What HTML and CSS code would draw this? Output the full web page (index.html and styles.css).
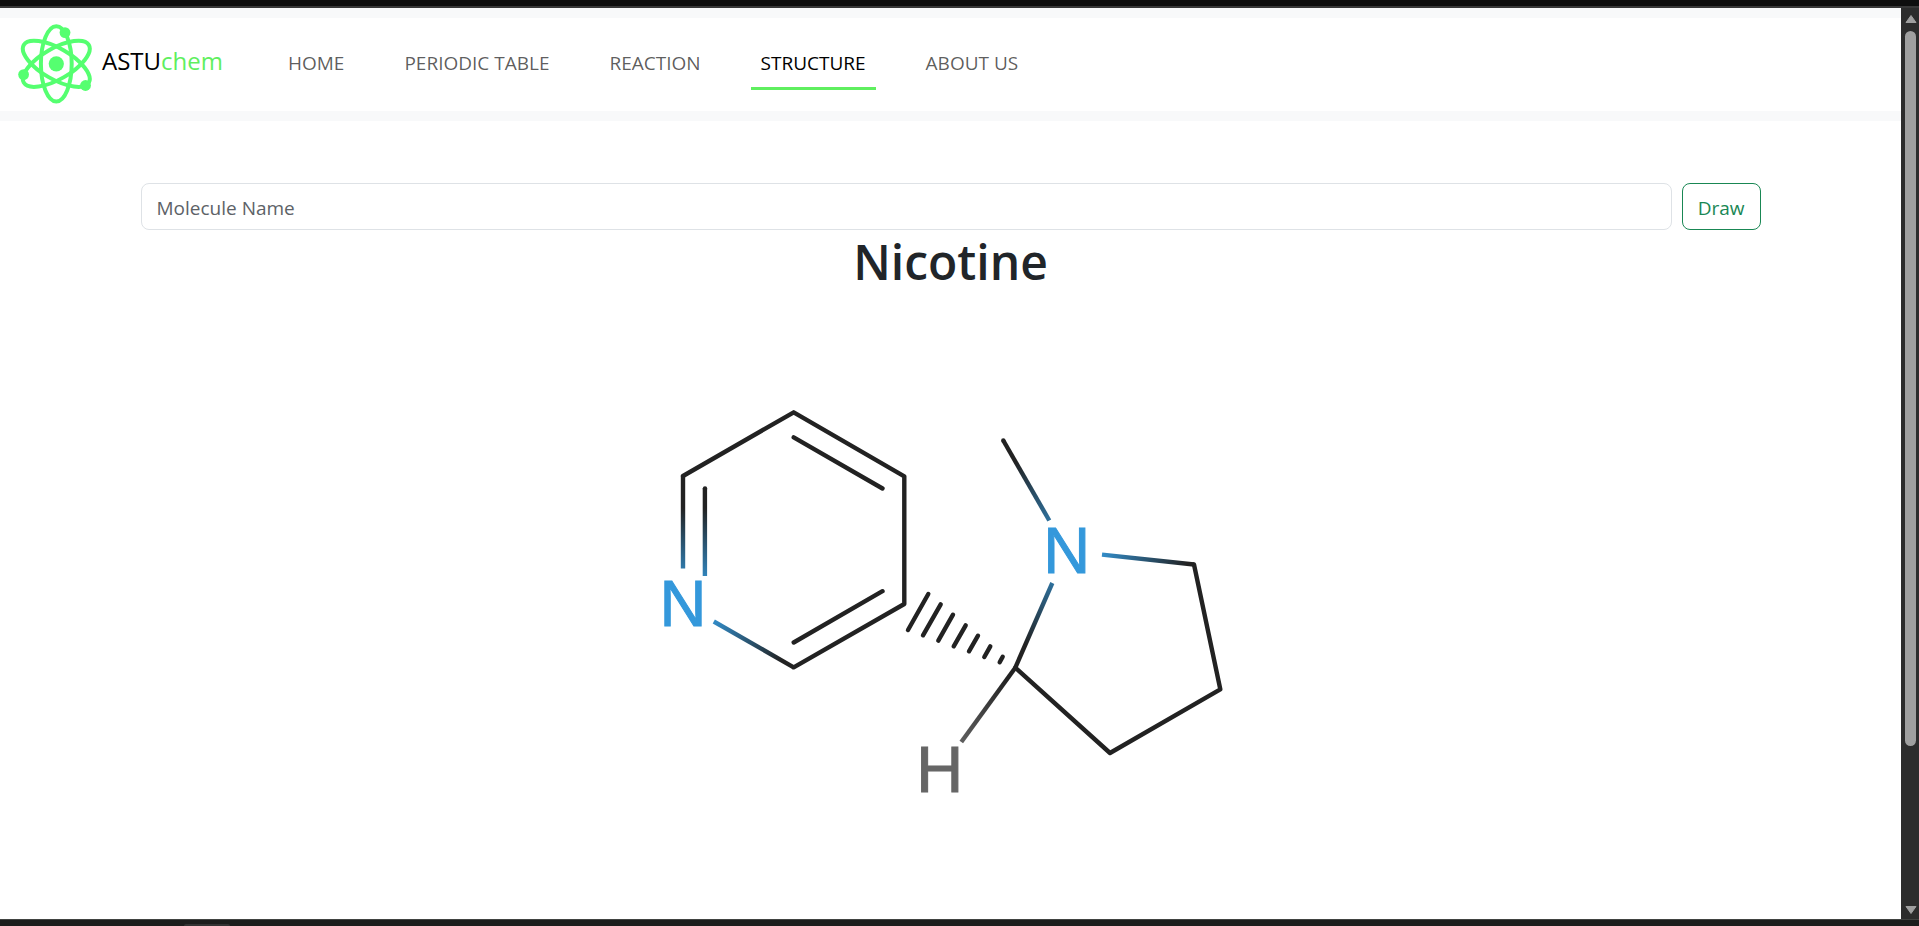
FILE: index.html
```html
<!DOCTYPE html>
<html lang="en">
<head>
<meta charset="utf-8">
<title>ASTUchem - Structure</title>
<link rel="stylesheet" href="styles.css">
</head>
<body>
<div class="window-top"></div>
<div class="viewport">
  <div class="page">
    <header class="site-header">
      <nav class="navbar" aria-label="Main">
        <a class="brand" href="#">
          <svg class="brand-logo" viewBox="18 23 76 82" aria-hidden="true">
            <g fill="none" stroke="#55ff70" stroke-width="4">
              <ellipse cx="56.3" cy="63.8" rx="15.4" ry="37.6"/>
              <ellipse cx="56.3" cy="63.8" rx="15.4" ry="37.6" transform="rotate(60 56.3 63.8)"/>
              <ellipse cx="56.3" cy="63.8" rx="15.4" ry="37.6" transform="rotate(-60 56.3 63.8)"/>
            </g>
            <g fill="#55ff70">
              <circle cx="56.3" cy="63.8" r="7.6"/>
              <circle cx="65" cy="32.6" r="5.4"/>
              <circle cx="23.6" cy="74.6" r="5.4"/>
              <circle cx="85.5" cy="85.5" r="5.4"/>
            </g>
          </svg>
          <span class="brand-name">ASTU<span class="brand-accent">chem</span></span>
        </a>
        <ul class="nav-list">
          <li><a class="nav-link" href="#">HOME</a></li>
          <li><a class="nav-link" href="#">PERIODIC TABLE</a></li>
          <li><a class="nav-link" href="#">REACTION</a></li>
          <li><a class="nav-link active" href="#" aria-current="page">STRUCTURE</a></li>
          <li><a class="nav-link" href="#">ABOUT US</a></li>
        </ul>
      </nav>
    </header>
    <main class="container">
      <form class="search">
        <input class="search-input" type="search" placeholder="Molecule Name" aria-label="Molecule Name">
        <button class="search-button" type="submit">Draw</button>
      </form>
      <h1 class="title">Nicotine</h1>
      <svg class="molecule" viewBox="640 293 621 620" role="img" aria-label="Structure of nicotine">
        <defs>
          <linearGradient id="b1" gradientUnits="userSpaceOnUse" x1="683" y1="476" x2="683" y2="604"><stop offset=".25" stop-color="#222"/><stop offset=".9" stop-color="#3498db"/></linearGradient>
          <linearGradient id="b2" gradientUnits="userSpaceOnUse" x1="793" y1="667" x2="683" y2="604"><stop offset=".1" stop-color="#222"/><stop offset=".8" stop-color="#3498db"/></linearGradient>
          <linearGradient id="b3" gradientUnits="userSpaceOnUse" x1="1003" y1="440" x2="1067" y2="551"><stop offset=".2" stop-color="#222"/><stop offset="1" stop-color="#3498db"/></linearGradient>
          <linearGradient id="b4" gradientUnits="userSpaceOnUse" x1="1194" y1="564" x2="1067" y2="551"><stop offset=".05" stop-color="#222"/><stop offset=".8" stop-color="#3498db"/></linearGradient>
          <linearGradient id="b5" gradientUnits="userSpaceOnUse" x1="1015" y1="668" x2="1067" y2="551"><stop offset=".2" stop-color="#222"/><stop offset="1" stop-color="#3498db"/></linearGradient>
          <linearGradient id="b6" gradientUnits="userSpaceOnUse" x1="1015" y1="668" x2="940" y2="770"><stop offset=".1" stop-color="#222"/><stop offset=".8" stop-color="#666"/></linearGradient>
        </defs>
        <g fill="none" stroke="#222" stroke-width="4.4" stroke-linecap="round" stroke-linejoin="round">
          <path d="M683 476L793.7 412.3L904.3 476.3V604L793.7 667.3"/>
          <path d="M793.7 437.3L882.5 488.5M793.7 642.5L882.5 591.2"/>
          <path d="M1194 564.5L1220.3 689.3L1110 753L1015.3 667.7"/>
          <path d="M928.3 594L908 630M940.7 604.3L923 635.3M953 614.7L938.3 640.7M965.7 625.3L953.7 646.3M978 635.7L969 651.3M990.3 646.3L984.3 657M1002.7 656.7L999.7 662.3"/>
          <path d="M705 488.5V489"/>
        </g>
        <g fill="none" stroke-width="4.4">
          <path d="M683 476V568.5M704.9 488V576" stroke="url(#b1)"/>
          <path d="M793.7 667.3L713.8 621.5" stroke="url(#b2)"/>
          <path d="M1003.3 440.5L1049.3 520.5" stroke="url(#b3)"/>
          <path d="M1194 564.5L1102 554.6" stroke="url(#b4)"/>
          <path d="M1015.3 667.7L1052.3 583" stroke="url(#b5)"/>
          <path d="M1015.3 667.7L961.3 742" stroke="url(#b6)"/>
        </g>
        <circle cx="1003.3" cy="440.5" r="2.2" fill="#222"/>
        <g class="atoms">
          <text class="nitrogen" x="683" y="626">N</text>
          <text class="nitrogen" x="1066.7" y="572.5">N</text>
          <text class="hydrogen" x="939.7" y="792">H</text>
        </g>
      </svg>
    </main>
  </div>
  <div class="scrollbar" aria-hidden="true">
    <svg class="scroll-arrow" viewBox="0 0 12 10"><path d="M6 1.5L11 8.5H1Z"/></svg>
    <div class="scroll-track"><div class="scroll-thumb"></div></div>
    <svg class="scroll-arrow" viewBox="0 0 12 10"><path d="M6 8.5L11 1.5H1Z"/></svg>
  </div>
</div>
<div class="window-bottom"><div class="task-tab"></div></div>
</body>
</html>
```
FILE: styles.css
```css
* {
  box-sizing: border-box;
}

body {
  margin: 0;
  height: 100vh;
  display: flex;
  flex-direction: column;
  overflow: hidden;
  background: #fff;
  color: #212529;
  font: 19px/30px "Open Sans", "Noto Sans", sans-serif;
}

.window-top {
  flex: none;
  height: 8px;
  background: #0e0e0e;
  border-bottom: 2px solid #383838;
}

.window-bottom {
  flex: none;
  height: 7px;
  padding: 4px 0 0 184px;
  background: #1c1d1c;
  border-top: 1px solid #414341;
}

.task-tab {
  width: 46px;
  height: 2px;
  background: #333;
  border-radius: 2px 2px 0 0;
}

.viewport {
  flex: 1;
  min-height: 0;
  display: flex;
}

.page {
  flex: 1;
  min-width: 0;
  overflow: hidden;
}

.site-header {
  padding: 10px 0;
  background: #f8f9fa;
}

.navbar {
  display: flex;
  align-items: center;
  gap: 55px;
  padding: 5px 18px 6px;
  background: #fff;
}

.brand {
  display: flex;
  align-items: center;
  gap: 8px;
  color: #000;
  font-size: 24px;
  text-decoration: none;
}

.brand-logo {
  width: 76px;
  height: 82px;
}

.brand-name {
  padding-bottom: 6px;
}

.brand-accent {
  color: #5fef5f;
}

.nav-list {
  display: flex;
  gap: 40px;
  margin: 0;
  padding: 0;
  list-style: none;
}

.nav-link {
  display: block;
  padding: 10px 10px 9px;
  border-bottom: 3px solid transparent;
  color: rgba(0, 0, 0, 0.65);
  text-decoration: none;
}

.nav-link.active {
  color: #000;
  border-color: #5fef5f;
}

.container {
  max-width: 1650px;
  margin: 0 auto;
  padding: 62px 15px 0;
}

.search {
  display: flex;
  gap: 10px;
}

.search-input,
.search-button {
  height: 47px;
  padding: 2px 15px 0;
  border: 1px solid #dee2e6;
  border-radius: 8px;
  background: #fff;
  font: inherit;
}

.search-input {
  flex: 1;
  min-width: 0;
  color: #212529;
}

.search-input::placeholder {
  color: #5d6267;
  opacity: 1;
}

.search-button {
  border-color: #198754;
  color: #198754;
}

.title {
  margin: 0;
  padding-top: 2px;
  font-size: 48px;
  font-weight: 600;
  line-height: 60px;
  text-align: center;
}

.molecule {
  display: block;
  width: 621px;
  max-width: 100%;
  margin: 1px auto 0;
}

.atoms {
  font: 65px "Liberation Sans", Arial, sans-serif;
  text-anchor: middle;
}

.nitrogen {
  fill: #3498db;
  stroke: #3498db;
}

.hydrogen {
  fill: #666;
  stroke: #666;
}

.scrollbar {
  flex: none;
  width: 18px;
  display: flex;
  flex-direction: column;
  align-items: center;
  gap: 7px;
  padding: 6px 0 4px 1px;
  background: #2c2c2c;
}

.scroll-arrow {
  flex: none;
  width: 14px;
  height: 10px;
  fill: #9f9f9f;
  stroke: #9f9f9f;
  stroke-linejoin: round;
}

.scroll-track {
  flex: 1;
  width: 11px;
}

.scroll-thumb {
  height: 82.5%;
  background: #9f9f9f;
  border-radius: 6px;
}
```
